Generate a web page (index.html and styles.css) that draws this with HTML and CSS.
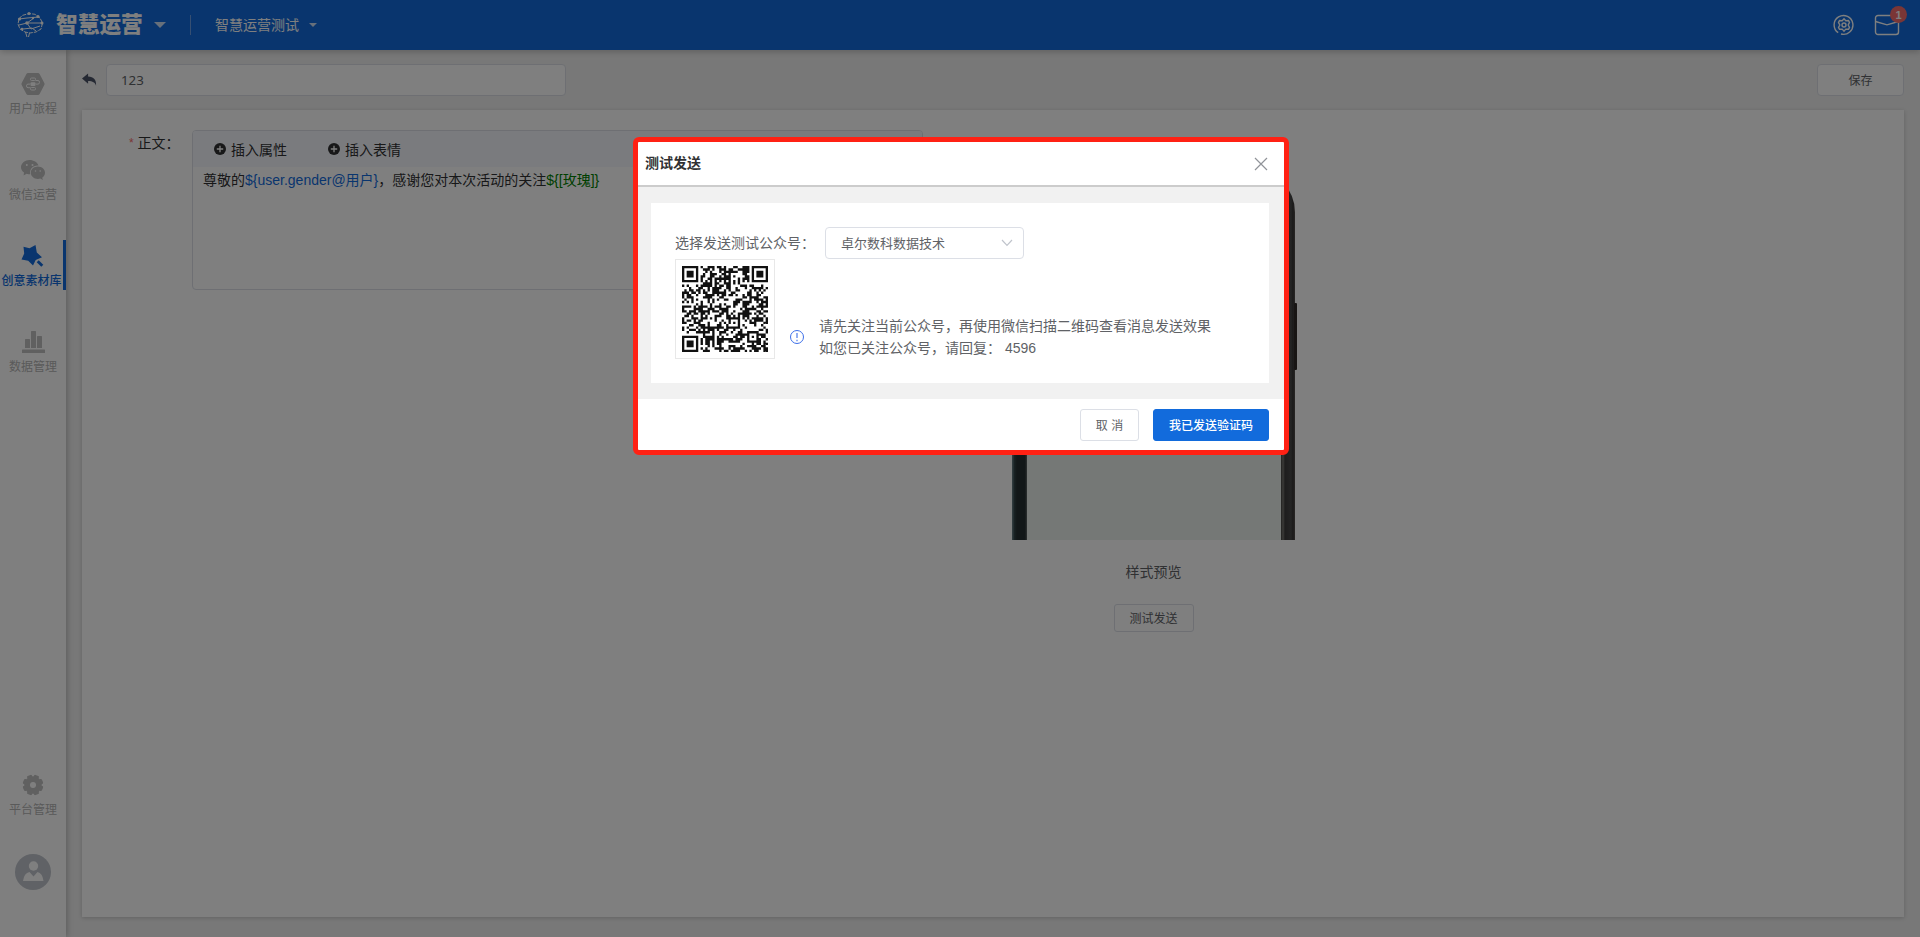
FILE: index.html
```html
<!DOCTYPE html>
<html lang="zh-CN">
<head>
<meta charset="utf-8">
<title>智慧运营</title>
<link rel="stylesheet" href="styles.css">
</head>
<body>
<div class="app">
  <header class="topbar">
    <svg class="brain" viewBox="0 0 28 28" width="28" height="28" fill="none" stroke="#fff" stroke-width="1">
      <path d="M3 8 6 4.500l7-2 6 .8 5 3.700 2.500 5-1.500 6-5 3-6 1-5-1-5-3-2-5z" stroke-dasharray="4 1"/>
      <path d="M3 8l8-1 12-1M11 12l7-5M11 12l14 0M3 14l8-2 4 6 9-3M7 18l9-1 4 3M9.500 21l1.500 5M13.500 22l-1 4"/>
      <g fill="#fff" stroke="none"><circle cx="3.500" cy="8" r="1.600"/><circle cx="13" cy="2.500" r="1.600"/><circle cx="22" cy="5.500" r="1.600"/><circle cx="11" cy="12" r="1.800"/><circle cx="26" cy="12" r="1.500"/><circle cx="17" cy="7" r="1.200"/><circle cx="6" cy="18" r="1.300"/></g>
    </svg>
    <span class="brand">智慧运营</span>
    <i class="caret caret-lg"></i>
    <i class="divider"></i>
    <span class="project">智慧运营测试</span>
    <i class="caret"></i>
    <div class="tools">
      <svg viewBox="0 0 22 22" width="22" height="22" fill="none" stroke="#fff" stroke-width="1.400">
        <path d="M5.200 18.700A9.400 9.400 0 1 1 8 20M3.600 17.500l.3.300"/>
        <path d="M11 4.800l1.800 2 2.700-.2 1 1.800-1.300 2.600 1.300 2.400-1 1.900-2.700-.2-1.800 2.100-1.800-2.100-2.700.2-1-1.900L6.800 11 5.500 8.400l1-1.800 2.700.2z"/>
        <circle cx="11" cy="11" r="2"/>
      </svg>
      <div class="mail">
        <svg viewBox="0 0 26 22" width="26" height="22" fill="none" stroke="#fff" stroke-width="1.400"><rect x="1.500" y="1.500" width="23" height="19" rx="2.500"/><path d="M1.500 7.500l11.500 3.300 11.500-3.300"/></svg>
        <b class="badge">1</b>
      </div>
    </div>
  </header>
  <div class="main">
    <nav class="side">
      <a class="item">
        <svg viewBox="0 0 24 24" width="24" height="24"><path d="M7 1h10q1 0 1.600 1l4.700 9q.5 1 0 2l-4.700 9q-.6 1-1.600 1H7q-1 0-1.600-1L.7 13q-.5-1 0-2l4.700-9Q6 1 7 1z" fill="#c0c0c0"/><g fill="none" stroke="#fff" stroke-width="1"><rect x="9.500" y="6" width="5" height="2.500" rx="1"/><rect x="9.500" y="15.500" width="5" height="2.500" rx="1"/><path d="M14.500 8.500h2.500q1.500 0 1.500 1.800t-1.500 1.800h-2M9.500 15.700H7q-1.500 0-1.500-1.800T7 12.100h2"/></g><rect x="9.500" y="10.200" width="5" height="3.800" rx="1" fill="#fff"/></svg>
        <span>用户旅程</span>
      </a>
      <a class="item">
        <svg viewBox="0 0 24 24" width="24" height="24"><path d="M8.600 2C3.900 2 0 5.200 0 9.200c0 2.200 1.200 4.100 3 5.400l-.4 2.900 3-1.800c1.200.4 2.400.5 3.700.5-1.300-5 3-9.300 8.200-8.700C16.300 4.300 12.800 2 8.600 2z" fill="#c0c0c0"/><path d="M24 14.700c0-3.400-3.200-6.200-7.100-6.200s-7.100 2.800-7.100 6.200 3.200 6.200 7.100 6.200c.8 0 1.600-.1 2.400-.4l2.600 1.500-.7-2.300c1.700-1.100 2.800-2.900 2.800-5z" fill="#c0c0c0"/><g fill="#fff"><circle cx="5.800" cy="7" r="1"/><circle cx="11.500" cy="7" r="1"/><circle cx="14.500" cy="13" r=".8"/><circle cx="19.200" cy="13" r=".8"/></g></svg>
        <span>微信运营</span>
      </a>
      <a class="item active">
        <svg class="star" viewBox="0 0 24 24" width="24" height="24" fill="#126bdc"><path d="M14.500 1l1.300 7.500 5.200 4.800-6.300 2.700L12 21.500l-4.800-4.700L.5 15.500l2.700-6L2.500 2.800l6 1.400z"/><path d="M15.700 18.200l2-1.900 4.600 4.500-2 1.900z"/></svg>
        <span>创意素材库</span>
      </a>
      <a class="item">
        <svg viewBox="0 0 24 24" width="24" height="24" fill="#c0c0c0"><rect x="4" y="9" width="5" height="9" rx=".5"/><rect x="10" y="1" width="5" height="17" rx=".5"/><rect x="16" y="6" width="5" height="12" rx=".5"/><rect x="1" y="19.500" width="23" height="3.500" rx=".5"/></svg>
        <span>数据管理</span>
      </a>
      <a class="item settings">
        <svg viewBox="0 0 24 24" width="24" height="24"><circle cx="12" cy="12" r="8.700" fill="#c0c0c0"/><g fill="#c0c0c0"><rect id="tooth" x="9.400" y="1.700" width="5.200" height="20.600" rx="1.200" transform="rotate(22.500 12 12)"/><rect x="9.400" y="1.700" width="5.200" height="20.600" rx="1.200" transform="rotate(67.500 12 12)"/><rect x="9.400" y="1.700" width="5.200" height="20.600" rx="1.200" transform="rotate(112.500 12 12)"/><rect x="9.400" y="1.700" width="5.200" height="20.600" rx="1.200" transform="rotate(157.500 12 12)"/></g><circle cx="12" cy="12" r="3" fill="#fff"/></svg>
        <span>平台管理</span>
      </a>
      <svg class="avatar" viewBox="0 0 36 36" width="36" height="36"><circle cx="18" cy="18" r="18" fill="#c0c4cc"/><circle cx="18.500" cy="12" r="4.700" fill="#fff"/><path d="M8 27q1-8 6.500-9l4 4.500 4-4.500q5 1 6 9z" fill="#fff"/></svg>
    </nav>
    <section class="content">
      <div class="bar">
        <svg viewBox="0 0 16 14" width="15" height="14"><path d="M0 5.500L6.500 0v3.300c6 .2 9 3.500 8.500 9.700-1.200-3.400-3.500-4.900-8.500-5V11z" fill="#4b5267"/></svg>
        <div class="field title-field">123</div>
        <div class="field save">保存</div>
      </div>
      <div class="panel">
        <div class="label"><i>*</i> 正文：</div>
        <div class="editor">
          <div class="inserts">
            <span><svg viewBox="0 0 12 12" width="12" height="12"><circle cx="6" cy="6" r="6" fill="#303133"/><path d="M6 2.800v6.400M2.800 6h6.400" stroke="#fff" stroke-width="1.300"/></svg>插入属性</span>
            <span><svg viewBox="0 0 12 12" width="12" height="12"><circle cx="6" cy="6" r="6" fill="#303133"/><path d="M6 2.800v6.400M2.800 6h6.400" stroke="#fff" stroke-width="1.300"/></svg>插入表情</span>
          </div>
          <div class="text">尊敬的<span class="var">${user.gender@用户}</span>，感谢您对本次活动的关注<span class="emo">${[玫瑰]}</span></div>
        </div>
        <div class="preview">
          <div class="phone"><div class="screen"></div></div>
          <div class="caption">样式预览</div>
          <div class="field test">测试发送</div>
        </div>
      </div>
    </section>
  </div>
</div>
<div class="mask">
  <div class="dialog">
    <div class="dialog-head">
      <b>测试发送</b>
      <svg viewBox="0 0 14 14" width="14" height="14" fill="none" stroke="#909399" stroke-width="1.200"><path d="M1 1l12 12M13 1L1 13"/></svg>
    </div>
    <div class="dialog-body">
      <div class="card">
        <div class="row"><span class="pick">选择发送测试公众号：</span>
          <div class="select"><span>卓尔数科数据技术</span><svg viewBox="0 0 12 8" width="12" height="8" fill="none" stroke="#c0c4cc" stroke-width="1.200"><path d="M1 1l5 5.300L11 1"/></svg></div>
        </div>
        <div class="scan">
          <div class="qr"><svg id="qr" viewBox="0 0 37 37" width="86" height="86"></svg></div>
          <svg class="info" viewBox="0 0 14 14" width="14" height="14"><circle cx="7" cy="7" r="6.500" fill="none" stroke="#3d6fe8"/><path d="M7 3v5M7 9.800v1.400" stroke="#3d6fe8" stroke-width="1.100"/></svg>
          <div class="hint"><p>请先关注当前公众号，再使用微信扫描二维码查看消息发送效果</p><p>如您已关注公众号，请回复： <span class="code">4596</span></p></div>
        </div>
      </div>
    </div>
    <div class="dialog-foot"><div class="btn">取 消</div><div class="btn primary">我已发送验证码</div></div>
  </div>
</div>
<script src="qr.js"></script>
</body>
</html>
```
FILE: styles.css
```css
* { box-sizing: border-box; }
body { margin: 0; font-family: "Liberation Sans", "Noto Sans CJK SC", sans-serif; font-size: 14px; color: #606266; overflow: hidden; }
i { font-style: normal; }
svg { flex: none; display: block; }
p { margin: 0; }
.app { height: 937px; display: flex; flex-direction: column; background: #f0f0f0; }
.topbar { height: 50px; flex: none; background: #126bdc; color: #fff; display: flex; align-items: center; padding: 0 21px 0 16px; box-shadow: 0 2px 6px rgba(0,0,0,.2); z-index: 2; white-space: nowrap; }
.brand { width: 87px; margin-left: 12px; font-size: 21.7px; font-weight: 900; line-height: 50px; }
.caret { border: 4px solid transparent; border-top: 4px solid #cfe0f7; border-bottom: 0; margin-left: 10px; }
.caret-lg { border-width: 6px 6px 0; margin-left: 11px; }
.divider { width: 1px; height: 20px; background: #6d9fe4; margin: 0 24px; }
.project { font-size: 14px; padding-bottom: 2px; }
.tools { margin-left: auto; display: flex; gap: 19px; }
.mail { position: relative; margin-right: -1px; }
.badge { position: absolute; left: 16px; top: -8px; width: 17px; height: 17px; border-radius: 9px; background: #f56c6c; font-size: 11px; line-height: 18px; text-align: center; }
.main { flex: 1; display: flex; min-height: 0; }
.side { width: 66px; background: #fff; display: flex; flex-direction: column; align-items: center; padding: 18px 0 47px; gap: 36px; box-shadow: 1px 0 6px rgba(0,0,0,.25); z-index: 1; }
.item { width: 66px; height: 50px; display: flex; flex-direction: column; align-items: center; gap: 4px; padding-top: 4px; font-size: 12px; line-height: 18px; color: #b4b4b4; white-space: nowrap; }
.item.active { color: #126bdc; border-right: 3px solid #126bdc; font-weight: 500; }
.star { margin-left: 2px; }
.settings { margin-top: auto; }
.avatar { margin-top: -1px; }
.content { flex: 1; padding: 14px 16px 20px; display: flex; flex-direction: column; gap: 14px; }
.bar { height: 32px; display: flex; align-items: center; }
.field { border: 1px solid #dcdfe6; border-radius: 4px; background: #fff; height: 32px; display: flex; align-items: center; justify-content: center; font-size: 12px; color: #606266; padding-bottom: 2px; }
.title-field { width: 460px; margin-left: 9px; justify-content: flex-start; padding: 0 0 1px 14px; font-family: "Noto Sans", sans-serif; font-size: 13.300px; }
.save { width: 87px; margin-left: auto; }
.panel { flex: 1; background: #fff; box-shadow: 0 1px 4px rgba(0,0,0,.18); display: flex; align-items: flex-start; padding: 20px 0 0 47px; }
.label { width: 63px; line-height: 26px; color: #303133; white-space: nowrap; }
.label i { color: #f56c6c; font-size: 12px; vertical-align: 1px; }
.editor { width: 731px; height: 160px; border: 1px solid #dcdfe6; border-radius: 4px; overflow: hidden; }
.inserts { height: 36px; background: #f5f7fd; display: flex; gap: 41px; padding: 0 0 1px 21px; color: #303133; }
.inserts span { display: flex; align-items: center; gap: 5px; }
.text { color: #303133; padding: 3px 10px; line-height: 21px; }
.var { color: #126bdc; }
.emo { color: #008000; }
.preview { width: 287px; margin-left: 87px; display: flex; flex-direction: column; align-items: center; }
.phone { position: relative; width: 283px; height: 370px; margin-top: 40px; padding: 15px 14px 0 15px; border-radius: 42px 42px 0 0; background: linear-gradient(90deg, #60777c 0 1px, #34474a 2px, #242e30 5px, #242e30 13px, #5c6464 15px, #252525 268px, #777772 271px, #3b3b3b 273px, #494949 279px, #363333 281px, #55504e 283px); }
.phone::after { content: ""; position: absolute; right: -2px; top: 133px; width: 3px; height: 67px; background: #302b29; border-radius: 1px; }
.screen { height: 100%; background: #eaf0ed; border-radius: 28px 28px 0 0; }
.caption { margin-top: 21px; line-height: 22px; }
.test { width: 80px; height: 28px; margin-top: 21px; border-radius: 3px; }
.mask { position: fixed; inset: 0; background: rgba(0,0,0,.5); z-index: 5; }
.dialog { width: 656px; height: 318px; margin: 137px 0 0 633px; border: 5px solid #ff2114; border-radius: 6px; background: #fff; display: flex; flex-direction: column; overflow: hidden; }
.dialog-head { height: 45px; border-bottom: 2px solid #ccc; display: flex; justify-content: space-between; align-items: center; padding: 0 16px 0 7px; color: #303133; }
.dialog-head b { font-weight: 700; font-size: 14px; padding-bottom: 3px; }
.dialog-head svg { margin-top: 1px; }
.dialog-body { height: 212px; background: #f1f1f1; padding: 16px 15px 16px 13px; }
.card { height: 180px; background: #fff; padding: 24px; }
.row { display: flex; align-items: center; white-space: nowrap; }
.pick { width: 150px; padding-bottom: 2px; }
.select { width: 199px; height: 32px; border: 1px solid #dcdfe6; border-radius: 4px; display: flex; align-items: center; justify-content: space-between; padding: 0 10px 0 15px; font-size: 13px; }
.select span { padding-bottom: 2px; }
.scan { display: flex; align-items: flex-end; height: 100px; }
.qr { width: 100px; height: 100px; border: 1px solid #e8e8e8; padding: 6px; flex: none; }
.info { margin: 0 15px 15px; }
.hint { line-height: 22px; white-space: nowrap; }
.dialog-foot { flex: 1; display: flex; justify-content: flex-end; gap: 14px; padding: 10px 15px 0; }
.btn { width: 59px; height: 32px; border: 1px solid #dcdfe6; border-radius: 3px; font-size: 12px; line-height: 32px; text-align: center; white-space: nowrap; }
.primary { width: 116px; background: #126bdc; border-color: #126bdc; color: #fff; font-weight: 500; }
```
FILE: qr.js
```js
const size = 37;
let seed = 4596;
const next = () => (seed = (seed * 1103515245 + 12345) % 2147483648) / 2147483648;
const finder = (x, y) => {
  const d = Math.max(Math.abs(x - 3), Math.abs(y - 3));
  return d > 4 ? null : d !== 2 && d !== 4;
};
let path = "";
for (let y = 0; y < size; y++) {
  for (let x = 0; x < size; x++) {
    let on = next() > 0.48;
    if (x === 6 || y === 6) on = (x + y) % 2 === 0;
    const a = Math.max(Math.abs(x - 30), Math.abs(y - 30));
    if (a < 3) on = a !== 1;
    for (const v of [finder(x, y), finder(size - 1 - x, y), finder(x, size - 1 - y)]) {
      if (v !== null) on = v;
    }
    if (on) path += `M${x} ${y}h1v1h-1z`;
  }
}
document.getElementById("qr").innerHTML = `<path d="${path}" fill="#111"/>`;
```
